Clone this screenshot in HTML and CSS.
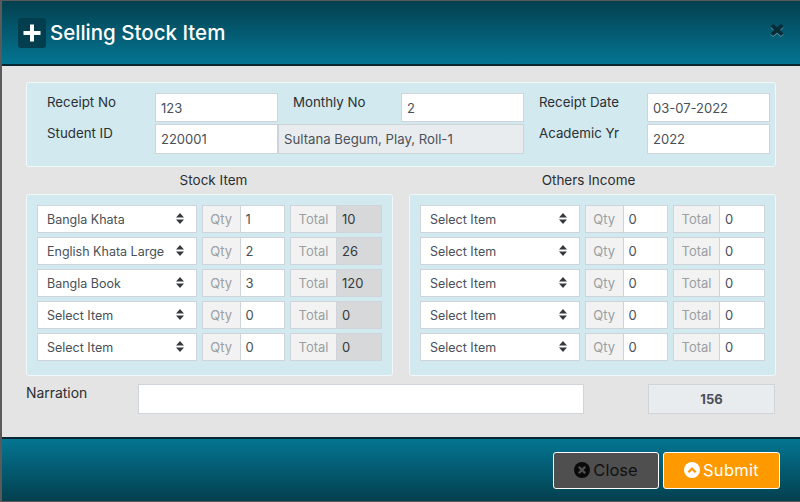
FILE: index.html
```html
<!DOCTYPE html>
<html lang="en">
<head>
    <meta charset="UTF-8">
    <meta name="viewport" content="width=device-width, initial-scale=1.0">
    <title>Selling Stock Item</title>
    <link rel="stylesheet" href="styles.css">
</head>
<body>
    <div class="modal">
        <!-- Header -->
        <div class="modal-header">
            <span class="title-icon">
                <svg width="20" height="20" viewBox="0 0 20 20"><path d="M8 1.500h4v6.500h6.500v4H12v6.500H8V12H1.500V8H8z" fill="#fff"/></svg>
            </span>
            <h1>Selling Stock Item</h1>
            <button class="btn-x" aria-label="Close">
                <svg width="14" height="14" viewBox="0 0 14 14"><path d="M3 1l4 3.200L11 1l2.500 2.500L10 7l3.500 3.500L11 13 7 9.800 3 13 .5 10.500 4 7 .5 3.500z" fill="#082d38"/></svg>
            </button>
        </div>

        <div class="modal-body">
            <!-- Receipt info -->
            <div class="panel receipt">
                <label>Receipt No</label>
                <input class="field" value="123">
                <label class="col-label-2">Monthly No</label>
                <input class="field" value="2">
                <label class="col-label-3">Receipt Date</label>
                <input class="field" value="03-07-2022">
                <label>Student ID</label>
                <input class="field" value="220001">
                <input class="field student-name" value="Sultana Begum, Play, Roll-1" readonly>
                <label class="col-label-3">Academic Yr</label>
                <input class="field" value="2022">
            </div>

            <div class="columns">
                <div>
                    <h2 class="title-stock">Stock Item</h2>
                    <div class="panel items">
                        <div class="item-row">
                            <span class="select-wrap"><select><option>Bangla Khata</option></select><svg width="8" height="11" viewBox="0 0 8 11"><path d="M4 0l4 4.500H0zM4 11L0 6.500h8z" fill="#343a40"/></svg></span>
                            <span class="addon qty">Qty</span><input class="field" value="1">
                            <span class="addon total">Total</span><input class="field locked" value="10" readonly>
                        </div>
                        <div class="item-row">
                            <span class="select-wrap"><select><option>English Khata Large</option></select><svg width="8" height="11" viewBox="0 0 8 11"><path d="M4 0l4 4.500H0zM4 11L0 6.500h8z" fill="#343a40"/></svg></span>
                            <span class="addon qty">Qty</span><input class="field" value="2">
                            <span class="addon total">Total</span><input class="field locked" value="26" readonly>
                        </div>
                        <div class="item-row">
                            <span class="select-wrap"><select><option>Bangla Book</option></select><svg width="8" height="11" viewBox="0 0 8 11"><path d="M4 0l4 4.500H0zM4 11L0 6.500h8z" fill="#343a40"/></svg></span>
                            <span class="addon qty">Qty</span><input class="field" value="3">
                            <span class="addon total">Total</span><input class="field locked" value="120" readonly>
                        </div>
                        <div class="item-row">
                            <span class="select-wrap"><select><option>Select Item</option></select><svg width="8" height="11" viewBox="0 0 8 11"><path d="M4 0l4 4.500H0zM4 11L0 6.500h8z" fill="#343a40"/></svg></span>
                            <span class="addon qty">Qty</span><input class="field" value="0">
                            <span class="addon total">Total</span><input class="field locked" value="0" readonly>
                        </div>
                        <div class="item-row">
                            <span class="select-wrap"><select><option>Select Item</option></select><svg width="8" height="11" viewBox="0 0 8 11"><path d="M4 0l4 4.500H0zM4 11L0 6.500h8z" fill="#343a40"/></svg></span>
                            <span class="addon qty">Qty</span><input class="field" value="0">
                            <span class="addon total">Total</span><input class="field locked" value="0" readonly>
                        </div>
                    </div>
                </div>
                <div>
                    <h2 class="title-others">Others Income</h2>
                    <div class="panel items">
                        <div class="item-row">
                            <span class="select-wrap"><select><option>Select Item</option></select><svg width="8" height="11" viewBox="0 0 8 11"><path d="M4 0l4 4.500H0zM4 11L0 6.500h8z" fill="#343a40"/></svg></span>
                            <span class="addon qty">Qty</span><input class="field" value="0">
                            <span class="addon total">Total</span><input class="field" value="0">
                        </div>
                        <div class="item-row">
                            <span class="select-wrap"><select><option>Select Item</option></select><svg width="8" height="11" viewBox="0 0 8 11"><path d="M4 0l4 4.500H0zM4 11L0 6.500h8z" fill="#343a40"/></svg></span>
                            <span class="addon qty">Qty</span><input class="field" value="0">
                            <span class="addon total">Total</span><input class="field" value="0">
                        </div>
                        <div class="item-row">
                            <span class="select-wrap"><select><option>Select Item</option></select><svg width="8" height="11" viewBox="0 0 8 11"><path d="M4 0l4 4.500H0zM4 11L0 6.500h8z" fill="#343a40"/></svg></span>
                            <span class="addon qty">Qty</span><input class="field" value="0">
                            <span class="addon total">Total</span><input class="field" value="0">
                        </div>
                        <div class="item-row">
                            <span class="select-wrap"><select><option>Select Item</option></select><svg width="8" height="11" viewBox="0 0 8 11"><path d="M4 0l4 4.500H0zM4 11L0 6.500h8z" fill="#343a40"/></svg></span>
                            <span class="addon qty">Qty</span><input class="field" value="0">
                            <span class="addon total">Total</span><input class="field" value="0">
                        </div>
                        <div class="item-row">
                            <span class="select-wrap"><select><option>Select Item</option></select><svg width="8" height="11" viewBox="0 0 8 11"><path d="M4 0l4 4.500H0zM4 11L0 6.500h8z" fill="#343a40"/></svg></span>
                            <span class="addon qty">Qty</span><input class="field" value="0">
                            <span class="addon total">Total</span><input class="field" value="0">
                        </div>
                    </div>
                </div>
            </div>

            <!-- Narration and grand total -->
            <div class="narration">
                <label>Narration</label>
                <input class="field narration-input">
                <div class="grand-total">156</div>
            </div>
        </div>

        <!-- Footer -->
        <div class="modal-footer">
            <button class="btn btn-close">
                <svg width="16" height="16" viewBox="0 0 16 16"><circle cx="8" cy="8" r="8" fill="#0a0a0a"/><path d="M5.500 4l2.500 2.300L10.500 4 12 5.500 9.700 8l2.300 2.500-1.500 1.500L8 9.700 5.500 12 4 10.500 6.300 8 4 5.500z" fill="#4f4f4f"/></svg>
                Close
            </button>
            <button class="btn btn-submit">
                <svg width="16" height="16" viewBox="0 0 16 16"><circle cx="8" cy="8" r="8" fill="#fff"/><path d="M3.500 9.500L8 5l4.500 4.500-1.700 1.500L8 8.200 5.200 11z" fill="#ff9900"/></svg>
                Submit
            </button>
        </div>
    </div>
</body>
</html>
```

FILE: styles.css
```css
body {
    margin: 0;
    padding: 1px 0 1px 2px;
    height: 500px;
    background-color: #5a5a5a;
    font-family: Inter, "Open Sans", sans-serif;
    font-size: 13px;
    color: #2b2f33;
    overflow: hidden;
}
.modal {
    display: flex;
    flex-direction: column;
    height: 500px;
    background-color: #e4e4e4;
}
.modal-header {
    display: flex;
    align-items: center;
    height: 63px;
    padding: 0 16px;
    background: linear-gradient(#03404f, #047592);
    border-bottom: 2px solid #0a2631;
    flex: none;
}
.title-icon {
    display: flex;
    align-items: center;
    justify-content: center;
    width: 28px;
    height: 30px;
    background-color: #033e4f;
    border-radius: 3px;
}
h1 {
    margin: 0 0 0 4px;
    font-size: 20.500px;
    font-weight: 500;
    color: white;
}
.btn-x {
    display: flex;
    margin: -6px 0 0 auto;
    padding: 0;
    background: none;
    border: none;
    filter: drop-shadow(0 1px 0 rgba(255, 255, 255, 0.35));
}
.modal-body {
    flex: 1;
    padding: 16px 24px 0;
}
.panel {
    background-color: #d1e9ef;
    border: 1px solid #f1f8fa;
    border-radius: 3px;
}
label {
    font-size: 13.300px;
    line-height: 18px;
}
.receipt {
    display: grid;
    grid-template-columns: 108px 123px 15px 108px 123px 15px 108px 123px;
    grid-template-rows: 29px 30px;
    row-gap: 2px;
    width: 750px;
    height: 85px;
    padding: 10px 0 0 20px;
    box-sizing: border-box;
}
.col-label-2 {
    grid-column: 4;
}
.col-label-3 {
    grid-column: 7;
}
.student-name {
    grid-column: 3 / 6;
}
input.field {
    min-width: 0;
    width: 100%;
    height: 100%;
    box-sizing: border-box;
    padding: 0 5px;
    font: inherit;
    color: #495057;
    background-color: white;
    border: 1px solid #ced4da;
    border-radius: 0;
    outline: none;
}
input.student-name {
    background-color: #e9ecef;
    font-size: 13.200px;
}
input.locked {
    background-color: #d6d8da;
    color: #343a40;
}
.columns {
    display: grid;
    grid-template-columns: 367px 367px;
    column-gap: 16px;
    width: 750px;
}
h2 {
    margin: 0;
    height: 27px;
    line-height: 27px;
    font-size: 13.500px;
    font-weight: 400;
    text-align: center;
}
.title-stock {
    padding-left: 8px;
}
.title-others {
    padding-right: 8px;
}
.items {
    height: 182px;
    box-sizing: border-box;
    padding: 10px 10px 0;
    display: flex;
    flex-direction: column;
    gap: 4px;
}
.item-row {
    display: grid;
    grid-template-columns: 160px 5px 37.500px 45.500px 5px 46px 46px;
    height: 28px;
}
.select-wrap {
    position: relative;
    grid-column: 1;
    display: flex;
}
.select-wrap svg {
    position: absolute;
    top: 8px;
    right: 13px;
}
select {
    appearance: none;
    width: 100%;
    padding: 0 9px;
    font: inherit;
    font-size: 12.500px;
    color: #495057;
    background-color: white;
    border: 1px solid #ced4da;
    border-radius: 0;
}
.addon {
    display: flex;
    align-items: center;
    justify-content: center;
    color: #9a9fa3;
    background-color: #f2f2f2;
    border: 1px solid #ced4da;
    border-right: none;
}
.qty {
    grid-column: 3;
}
.total {
    grid-column: 6;
}
.narration {
    display: grid;
    grid-template-columns: 112px 446px 64px 127px;
    height: 30px;
    margin-top: 8px;
    width: 749px;
}
.narration label {
    font-size: 13.900px;
}
.narration-input {
    grid-column: 2;
}
.grand-total {
    grid-column: 4;
    display: flex;
    align-items: center;
    justify-content: center;
    font-size: 13px;
    font-weight: 700;
    color: #495057;
    background-color: #e9ecef;
    border: 1px solid #ced4da;
}
.modal-footer {
    display: flex;
    justify-content: flex-end;
    align-items: flex-start;
    gap: 4px;
    height: 49px;
    padding: 13px 20px 0 0;
    background: linear-gradient(#047592, #03404f);
    border-top: 2px solid #0a2631;
    flex: none;
}
.btn {
    display: flex;
    align-items: center;
    justify-content: center;
    gap: 3px;
    height: 37px;
    padding: 0 0 2px;
    font-family: inherit;
    font-size: 16.500px;
    border: 1px solid white;
    border-radius: 3px;
}
.btn-close {
    width: 106px;
    color: #111;
    background-color: #4f4f4f;
}
.btn-submit {
    width: 117px;
    color: white;
    background-color: #ff9900;
    letter-spacing: 0.3px;
}
```
